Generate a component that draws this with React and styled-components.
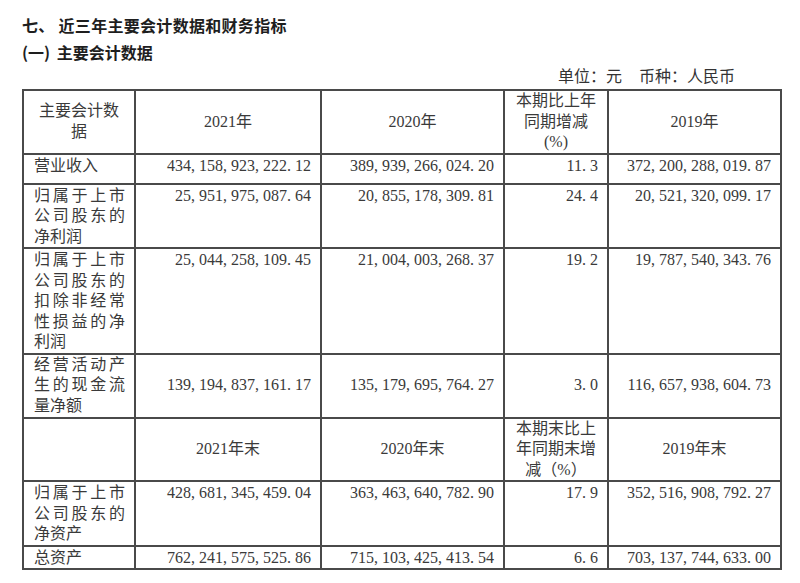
import React from "react";
import styled, { createGlobalStyle } from "styled-components";

const GlobalStyle = createGlobalStyle`
  html, body {
    margin: 0;
    padding: 0;
    background: #ffffff;
  }
  body {
    font-family: "Noto Sans CJK SC", sans-serif;
    color: #333;
  }
`;

const Page = styled.div`
  width: 800px;
  height: 583px;
  padding: 13px 0 0 22px;
  box-sizing: border-box;
  overflow: hidden;
`;

const Title = styled.h1`
  margin: 0;
  font-size: 16px;
  line-height: 24px;
  font-weight: 700;
  color: #1e1e1e;
  letter-spacing: 0.3px;
`;

const SubTitle = styled.h2`
  margin: 2px 0 0;
  font-size: 16px;
  line-height: 26px;
  font-weight: 700;
  color: #1e1e1e;
  word-spacing: 3px;
`;

const Unit = styled.div`
  display: flex;
  justify-content: flex-end;
  gap: 17px;
  width: 713px;
  font-size: 16px;
  line-height: 20px;
  color: #333;
`;

const Table = styled.table`
  margin-top: 4px;
  border-collapse: collapse;
  table-layout: fixed;
  width: 758px;
  font-family: "Liberation Serif", "Noto Sans CJK SC", serif;
  font-size: 16px;
  line-height: 20.5px;
  color: #3a3a3a;
`;

const Row = styled.tr`
  height: ${(p) => p.$h}px;
`;

const Cell = styled.td`
  border: 2px solid #4a4a4a;
  padding: ${(p) => (p.$valign === "middle" ? "0" : "1px")} 9px 0 10px;
  text-align: ${(p) => p.$align || "right"};
  vertical-align: ${(p) => p.$valign || "top"};
  word-break: break-all;
`;

const Label = styled(Cell).attrs({ $align: "justify" })`
  padding-right: 9px;
  text-justify: inter-character;
`;

const Head = styled(Cell).attrs({ $align: "center", $valign: "middle" })`
  padding: 0 8px;
`;

const Punct = styled.span`
  display: inline-block;
  width: 0.5em;
  text-align: left;
`;

function Num({ v }) {
  return (
    <>
      {v.split(/([,.])/).map((part, i) =>
        part === "," || part === "." ? <Punct key={i}>{part}</Punct> : part
      )}
    </>
  );
}

const rows = [
  { label: "营业收入", h: 30, vals: ["434,158,923,222.12", "389,939,266,024.20", "11.3", "372,200,288,019.87"] },
  { label: "归属于上市公司股东的净利润", h: 63, vals: ["25,951,975,087.64", "20,855,178,309.81", "24.4", "20,521,320,099.17"] },
  { label: "归属于上市公司股东的扣除非经常性损益的净利润", h: 104, vals: ["25,044,258,109.45", "21,004,003,268.37", "19.2", "19,787,540,343.76"] },
  { label: "经营活动产生的现金流量净额", h: 64, valign: "middle", vals: ["139,194,837,161.17", "135,179,695,764.27", "3.0", "116,657,938,604.73"] },
];

const rows2 = [
  { label: "归属于上市公司股东的净资产", h: 63, vals: ["428,681,345,459.04", "363,463,640,782.90", "17.9", "352,516,908,792.27"] },
  { label: "总资产", h: 21, vals: ["762,241,575,525.86", "715,103,425,413.54", "6.6", "703,137,744,633.00"] },
];

function DataRow({ r }) {
  return (
    <Row $h={r.h}>
      <Label $valign={r.valign}>{r.label}</Label>
      {r.vals.map((v) => (
        <Cell key={v} $valign={r.valign}>
          <Num v={v} />
        </Cell>
      ))}
    </Row>
  );
}

export default function App() {
  return (
    <Page lang="zh-CN">
      <GlobalStyle />
      <Title>七、 近三年主要会计数据和财务指标</Title>
      <SubTitle>(一) 主要会计数据</SubTitle>
      <Unit>
        <span>单位：元</span>
        <span>币种：人民币</span>
      </Unit>
      <Table>
        <colgroup>
          <col style={{ width: 112 }} />
          <col style={{ width: 186 }} />
          <col style={{ width: 183 }} />
          <col style={{ width: 104 }} />
          <col style={{ width: 173 }} />
        </colgroup>
        <tbody>
          <Row $h={61}>
            <Head>主要会计数<br />据</Head>
            <Head>2021年</Head>
            <Head>2020年</Head>
            <Head>本期比上年<br />同期增减<br />(%)</Head>
            <Head>2019年</Head>
          </Row>
          {rows.map((r) => (
            <DataRow key={r.label} r={r} />
          ))}
          <Row $h={61}>
            <Head></Head>
            <Head>2021年末</Head>
            <Head>2020年末</Head>
            <Head>本期末比上<br />年同期末增<br />减（%）</Head>
            <Head>2019年末</Head>
          </Row>
          {rows2.map((r) => (
            <DataRow key={r.label} r={r} />
          ))}
        </tbody>
      </Table>
    </Page>
  );
}
